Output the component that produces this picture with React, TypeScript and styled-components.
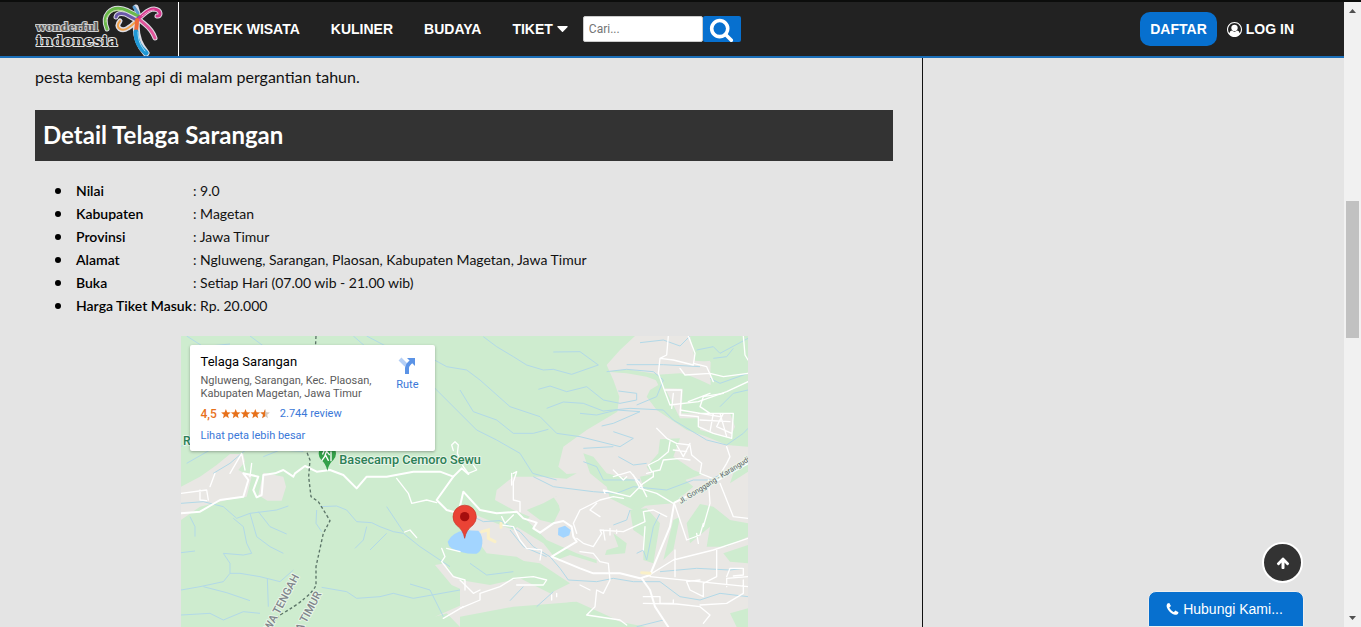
import React from "react";
import styled, { createGlobalStyle } from "styled-components";

const GlobalStyle = createGlobalStyle`
  *, *::before, *::after { box-sizing: border-box; }
  body {
    margin: 0;
    background: #e4e4e4;
    color: #111;
    font-family: Lato, "Open Sans", sans-serif;
  }
  a { color: inherit; text-decoration: none; }
`;

const sans = `"Liberation Sans", Arial, sans-serif`;
const blue = "#0770cf";

const Shell = styled.div`
  display: flex;
  flex-direction: column;
  height: 100vh;
  overflow: hidden;
`;

const TopStrip = styled.div`
  flex: none;
  height: 2px;
  background: #0c0d0c;
`;

const Window = styled.div`
  display: flex;
  flex: 1;
  min-height: 0;
`;

const Page = styled.div`
  flex: 1;
  min-width: 0;
  display: flex;
  flex-direction: column;
`;

const Header = styled.header`
  flex: none;
  display: flex;
  align-items: center;
  height: 56px;
  padding: 0 50px 0 35px;
  background: #222;
  border-bottom: 2px solid #1b6fb9;
  color: #fff;
  font: bold 14px/20px ${sans};
`;

const Brand = styled.a`
  display: flex;
  height: 54px;
  padding-right: 15px;
  border-right: 1px solid #fff;
`;

const Nav = styled.nav`
  display: flex;
  gap: 31px;
  margin-left: 14px;
`;

const NavLink = styled.a`
  display: flex;
  align-items: center;
  gap: 4px;
`;

const Search = styled.form`
  display: flex;
  margin-left: 15px;
`;

const SearchInput = styled.input`
  width: 120px;
  height: 26px;
  padding: 0 5px;
  border: 1px solid #ccc;
  border-radius: 2px;
  background: #fff;
  font: 12px/20px Roboto, sans-serif;
  &::placeholder { color: #757575; }
`;

const SearchButton = styled.button`
  display: flex;
  align-items: center;
  justify-content: center;
  width: 38px;
  height: 26px;
  padding: 0;
  border: 0;
  border-radius: 2px;
  background: ${blue};
  color: #fff;
`;

const Account = styled.div`
  display: flex;
  align-items: center;
  gap: 10px;
  margin-left: auto;
`;

const SignUp = styled.a`
  padding: 7px 10px;
  border-radius: 10px;
  background: ${blue};
`;

const LogIn = styled.a`
  display: flex;
  align-items: center;
  gap: 4px;
`;

const Content = styled.div`
  flex: 1;
  min-height: 0;
  display: flex;
  overflow: hidden;
`;

const Article = styled.main`
  flex: 1;
  min-width: 0;
  padding: 7px 29px 0 35px;
`;

const Aside = styled.aside`
  flex: none;
  width: 422px;
  border-left: 1px solid #111;
`;

const Paragraph = styled.p`
  margin: 0;
  font-size: 16px;
  line-height: 24px;
`;

const SectionTitle = styled.h2`
  margin: 21px 0 0;
  padding: 5px 8px 6px;
  background: #333;
  color: #fff;
  font-size: 24px;
  font-weight: 700;
  line-height: 40px;
`;

const Facts = styled.ul`
  margin: 18px 0 19px;
  padding-left: 20px;
  list-style: none;
  font-size: 14px;
  line-height: 23px;
`;

const Fact = styled.li`
  display: flex;
  align-items: center;
  &::before {
    content: "";
    width: 6px;
    height: 6px;
    margin-right: 15px;
    border-radius: 50%;
    background: #000;
  }
`;

const FactName = styled.strong`
  width: 117px;
  white-space: nowrap;
  font-weight: 600;
  color: #000;
`;

const MapFrame = styled.section`
  position: relative;
  width: 567px;
  max-width: 100%;
  margin: 0 auto;
  font-family: Roboto, sans-serif;
`;

const MapDrawing = styled.svg`
  display: block;
  width: 100%;
  height: auto;
`;

const PlaceCard = styled.div`
  position: absolute;
  top: 9px;
  left: 9px;
  display: flex;
  justify-content: space-between;
  width: 245px;
  height: 106px;
  padding: 9px 16px 0 11px;
  border-radius: 2px;
  background: #fff;
  box-shadow: 0 1px 3px rgba(0, 0, 0, 0.3);
  color: #5b5b5b;
  font-size: 11px;
  line-height: 13px;
`;

const PlaceName = styled.h3`
  margin: 0 0 4px;
  color: #000;
  font-size: 13px;
  font-weight: 400;
  line-height: 16px;
`;

const PlaceAddress = styled.p`
  margin: 0;
`;

const Rating = styled.div`
  display: flex;
  align-items: center;
  margin: 7px 0 8px;
  color: #e7711b;
  line-height: 14px;
`;

const Score = styled.span`
  margin-right: 4px;
  font-size: 12px;
  font-weight: 500;
`;

const MapLink = styled.a`
  color: #3a78d8;
`;

const ReviewLink = styled(MapLink)`
  margin-left: 10px;
`;

const RouteLink = styled(MapLink)`
  display: flex;
  flex-direction: column;
  align-items: center;
  gap: 4px;
  padding-top: 3px;
  height: 50px;
`;

const ToTop = styled.button`
  position: fixed;
  right: 58px;
  bottom: 44px;
  display: flex;
  align-items: center;
  justify-content: center;
  width: 41px;
  height: 41px;
  padding: 0;
  border: 2px solid #fff;
  border-radius: 50%;
  background: #333;
  color: #fff;
`;

const ContactTab = styled.button`
  position: fixed;
  right: 57px;
  bottom: 0;
  display: flex;
  align-items: center;
  justify-content: center;
  gap: 3px;
  width: 156px;
  height: 36px;
  padding: 0 4px 0 0;
  border: 1px solid #eee;
  border-radius: 8px 8px 0 0;
  background: ${blue};
  color: #fff;
  font: 14px/20px ${sans};
`;

const ScrollTrack = styled.div`
  flex: none;
  display: flex;
  flex-direction: column;
  align-items: center;
  width: 17px;
  padding: 7px 0;
  background: #f1f1f1;
`;

const ScrollThumb = styled.div`
  width: 13px;
  height: 137px;
  margin: 188px 2px auto;
  background: #c1c1c1;
`;

const glyphs = {
  search:
    "M1216 832q0-185-131.5-316.5t-316.5-131.5-316.5 131.5-131.5 316.5 131.5 316.5 316.5 131.5 316.5-131.5 131.5-316.5zm512 832q0 52-38 90t-90 38q-54 0-90-38l-343-342q-179 124-399 124-143 0-273.5-55.5t-225-150-150-225-55.5-273.5 55.5-273.5 150-225 225-150 273.5-55.5 273.5 55.5 225 150 150 225 55.5 273.5q0 220-124 399l343 343q37 37 37 90z",
  user:
    "M896 0q182 0 348 71t286 191 191 286 71 348q0 181-70.5 347t-190.5 286-286 191.5-349 71.5-349-71-285.5-191.5-190.5-286-71-347.5 71-348 191-286 286-191 348-71zm619 1351q149-205 149-455 0-156-61-298t-164-245-245-164-298-61-298 61-245 164-164 245-61 298q0 250 149 455 66-327 306-327 131 128 313 128t313-128q240 0 306 327zm-235-647q0-159-112.5-271.5t-271.5-112.5-271.5 112.5-112.5 271.5 112.5 271.5 271.5 112.5 271.5-112.5 112.5-271.5z",
  phone:
    "M1600 1240q0 27-10 70.5t-21 68.5q-21 50-122 106-94 51-186 51-27 0-53-3.5t-57.5-12.5-47-14.5-55.5-20.5-49-18q-98-35-175-83-127-79-264-216t-216-264q-48-77-83-175-3-9-18-49t-20.5-55.5-14.5-47-12.5-57.5-3.5-53q0-92 51-186 56-101 106-122 25-11 68.5-21t70.5-10q14 0 21 3 18 6 53 76 11 19 30 54t35 63.5 31 53.5q3 4 17.5 25t21.5 35.5 7 28.5q0 20-28.5 50t-62 55-62 53-28.5 46q0 9 5 22.5t8.5 20.5 14 24 11.5 19q76 137 174 235t235 174q2 1 19 11.5t24 14 20.5 8.5 22.5 5q18 0 46-28.5t53-62 55-62 50-28.5q14 0 28.5 7t35.5 21.5 25 17.5q25 15 53.5 31t63.5 35 54 30q70 35 76 53 3 7 3 21z",
  up:
    "M1675 971q0 51-37 90l-75 75q-38 38-91 38-54 0-90-38l-294-293v704q0 52-37.5 84.5t-90.5 32.5h-128q-53 0-90.5-32.5t-37.5-84.5v-704l-294 293q-36 38-90 38t-90-38l-75-75q-38-38-38-90 0-53 38-91l651-651q35-37 90-37 54 0 91 37l651 651q37 39 37 91z",
};

function Glyph({ name, size }: { name: keyof typeof glyphs; size: number }) {
  return (
    <svg width={size} height={size} viewBox="0 0 1792 1792" fill="currentColor" aria-hidden="true">
      <path d={glyphs[name]} />
    </svg>
  );
}

function Logo() {
  return (
    <svg width="128" height="54" viewBox="0 0 128 54" role="img" aria-label="Wonderful Indonesia">
      <g fontFamily="'DejaVu Serif', serif" paintOrder="stroke" strokeLinejoin="round">
        <text x="1" y="29" fontSize="11" fill="#555" stroke="#cfcfcf" strokeWidth="2">wonderful</text>
        <text x="1" y="44" fontSize="15" fill="#222" stroke="#e4e4e4" strokeWidth="2">indonesia</text>
      </g>
      <g fill="none" strokeLinecap="round" strokeLinejoin="round">
        <g stroke="#dcdce4" strokeWidth="5">
          <path d="M72 27C66 13 76 4 88 7c7 2 10 5 16 7" />
          <path d="M81 15c1-5 9-4 13-1 5 3 8 5 10 1l-3-10" />
          <path d="M85 19c-6 7 2 11 8 7 5-3 8-7 11-9" />
          <path d="M104 16c5-3 8-9 15-9 8 1 7 8 3 7" />
          <path d="M105 18c5 5 11 7 15 18" />
          <path d="M102 16c-3 17 2 27 9 35" strokeWidth="7" />
        </g>
        <path d="M72 27C66 13 76 4 88 7c7 2 10 5 16 7" stroke="#6ab84a" strokeWidth="3" />
        <path d="M71 20C71 11 79 7 88 9" stroke="#b5dd8c" strokeWidth="1" />
        <path d="M81 15c1-5 9-4 13-1 5 3 8 5 10 1" stroke="#6a58a8" strokeWidth="3" />
        <path d="M85 19c-6 7 2 11 8 7 5-3 8-7 11-9" stroke="#f0a24a" strokeWidth="2" />
        <path d="M104 16c5-3 8-9 15-9 8 1 7 8 3 7" stroke="#d6368c" strokeWidth="3" />
        <path d="M107 14c4-3 7-6 12-6" stroke="#f3a3cd" strokeWidth="1" />
        <path d="M105 18c5 5 11 7 15 18" stroke="#e0559a" strokeWidth="3" />
        <path d="M102 18c0 6-1 9-1 12" stroke="#ef6a3a" strokeWidth="4" />
        <path d="M101 30c0 10 4 16 10 21" stroke="#1f98d6" strokeWidth="5" />
        <path d="M103 30c0 9 3 14 7 19" stroke="#a5dcf4" strokeWidth="1" />
        <path d="M99 5l4 6" stroke="#5a9bd0" strokeWidth="3" />
      </g>
    </svg>
  );
}

const starPath = "M5 0l1.3 3.3 3.6.2L7.1 5.8l.9 3.5L5 7.4 2 9.3l.9-3.5L.1 3.5l3.6-.2z";

function Stars() {
  return (
    <svg width="49" height="10" viewBox="0 0 50 10" role="img" aria-label="4,5 dari 5">
      {[0, 10, 20, 30].map((x) => (
        <path key={x} d={starPath} transform={`translate(${x} 0)`} fill="#e7711b" />
      ))}
      <path d={starPath} transform="translate(40 0)" fill="#d5c8bd" />
      <path d="M45 0v7.4l-3 1.9.9-3.5-2.8-2.3 3.6-.2z" fill="#e7711b" />
    </svg>
  );
}

/* The map is drawn at three units to a pixel. */
function SaranganMap() {
  return (
    <MapDrawing viewBox="3 18 1701 1350" role="img" aria-label="Peta Telaga Sarangan">
      <rect x="3" y="18" width="1701" height="1350" fill="#ceeccf" />

      {/* built-up land */}
      <g fill="#e9e7e4">
        <path d="M3 470L60 440L110 405L150 372L190 372L195 395L175 420L215 440L200 500L140 510L60 530L3 570Z" />
        <path d="M250 428L310 440L318 470L305 512L262 512L235 495Z" />
        <path d="M765 705L795 700L810 730L850 755L900 760L920 790L860 785L815 765Z" />
        <path d="M765 860L900 800V891H840L800 850Z" />
        <path d="M1365 18L1320 60L1280 105L1300 150L1318 200L1312 245L1220 300L1150 350L1135 410L1160 432L1190 430L1160 446L1080 440L1000 440L950 480L945 510L1000 540L1050 560L1000 600L900 560L860 540L830 570L870 600L920 670L1010 680L1060 710L1110 740L1160 755L1090 775L1000 745L960 760L900 730L850 755V800L880 860L1000 850L1180 815L1290 870L1400 891V1368H1704V18Z" />
        <path d="M840 755L960 730L1040 745L1100 770L1160 830L1050 855L900 850L840 855Z" />
      </g>

      {/* forest */}
      <g fill="#ceeccf">
        <path d="M1530 18H1704V128L1640 140L1600 155L1590 135L1592 95L1545 92L1540 65Z" />
        <path d="M1280 125L1340 118L1430 132L1440 155L1400 140L1340 130Z" />
        <path d="M1420 135L1500 130L1590 148L1704 130V350L1640 345L1580 320L1520 300L1430 240L1400 200L1410 180L1435 165Z" />
        <path d="M1440 328L1500 325L1480 380L1540 420L1570 432L1500 455L1420 440L1400 410L1435 370Z" />
        <path d="M1210 370L1240 380L1280 430L1360 450L1390 480L1420 510L1370 545L1290 505L1280 470L1230 430Z" />
        <path d="M1380 440L1480 420L1540 470L1480 520L1360 530L1350 490L1390 470Z" />
        <path d="M1130 498L1140 540L1120 580L1080 570L1040 540L1090 520Z" />
        <path d="M960 540L1040 570L1100 630L1190 670L1250 690L1250 700L1170 675L1130 690L1090 640L1010 590Z" />
        <path d="M1300 610L1340 640L1335 670L1275 675L1280 660L1315 650Z" />
        <path d="M1350 540L1400 535L1440 580L1420 700L1390 690L1390 620L1360 600Z" />
        <path d="M1560 522L1600 530L1650 570L1704 580V620L1640 650L1580 650L1590 590L1530 640L1520 580Z" />
        <path d="M1630 670L1704 645V700L1650 695Z" />
        <path d="M1480 570L1500 560L1480 660L1450 690Z" />
        <path d="M840 665L920 680L1010 690L1080 700L1170 760L1110 790L1020 745L930 765L840 750Z" />
        <path d="M840 860L1000 830L1190 815L1290 860L1350 891H840Z" />
        <path d="M1650 850L1704 835V891H1670Z" />
        <path d="M1660 430L1704 400V425L1650 460Z" />
      </g>
      <g fill="#e9e7e4">
        <path d="M1440 60L1500 70L1510 105L1590 92L1592 165L1560 150L1500 125L1430 130Z" />
        <path d="M1455 175L1508 176L1505 250L1650 250L1665 290L1650 325L1560 300L1555 265L1500 265L1480 225Z" />
        <path d="M1120 500L1180 490L1190 550L1150 545Z" />
      </g>

      {/* rivers */}
      <g fill="none" stroke="#b2d9e8" strokeWidth="3" strokeLinejoin="round">
        <path d="M20 18L70 50L150 42M210 18L280 70L370 110L500 170L560 190L640 260L720 330M520 18L580 70L640 85L750 160L840 250L890 300L950 330L1020 370L1058 430L1130 450" />
        <path d="M560 18L640 60L700 55L800 110L860 120L900 150L990 230L1080 260L1130 310L1200 320L1320 350L1360 325L1300 305M910 20L950 50L1000 80L1040 105L1090 120L1120 118L1175 133L1255 105L1200 65L1120 66" />
        <path d="M1075 178L1110 168L1160 185L1220 170L1270 210L1320 220L1370 210L1370 190L1315 183M1100 235L1150 216L1210 220L1270 243L1350 235L1450 240L1480 270L1580 330L1640 345L1690 310L1704 295" />
        <path d="M1340 104L1450 104L1560 110M1280 125L1340 118L1420 125L1450 150L1430 200L1370 225M1200 250L1250 255L1310 240L1380 245L1300 280L1265 288" />
        <path d="M1380 38L1450 30L1500 48L1530 18M1550 60L1600 50L1620 70L1704 25M1600 85L1640 80L1660 55M1590 145L1620 160L1704 130M1620 230L1660 190L1704 180" />
        <path d="M840 180L880 245L950 270L1000 310L1060 310L1105 298M20 400L90 360L130 340M100 430L150 400L220 340M250 380L300 360L370 364M0 350L60 330M1210 395L1250 410L1270 450L1380 450" />
        <path d="M3 520L70 515L130 530L170 565L210 550L290 540L325 528M160 565L190 590L200 640L215 670L190 675L130 670L150 700L150 730L180 730L240 740L300 755L340 720M210 550L230 620L270 650L310 670M235 545L270 590L320 612M30 560L45 590L45 620M3 668L45 663M3 780L60 770L130 755L150 730M70 770L140 788L210 812M262 745L265 830M3 855L90 850L130 870L190 845L240 850" />
        <path d="M420 530L470 528L500 540L530 575L575 578L600 590L640 605L670 610L720 650L780 690L810 710M560 590L550 630L525 655M620 610L570 660M620 530L670 605M410 540L408 580L425 605M425 772L500 785L530 805L600 800L640 790L700 805L840 780M690 762L750 780L790 860" />
        <path d="M1060 440L1120 470L1240 485L1310 490L1360 470L1460 480L1540 450L1590 450L1704 390M860 550L910 575L960 572L1020 605L1060 650L1110 680L1140 715L1165 750L1250 755L1300 745L1360 755L1440 755L1500 800L1560 810L1620 790L1704 800" />
        <path d="M990 600L1030 650L1100 680M870 700L920 735L1000 725M990 812L1030 770M1070 830L1120 785M1300 585L1340 570L1350 540M1370 670L1390 660L1400 690L1420 590L1440 550M1440 725L1550 715L1650 720L1690 715M1370 890L1450 870M1315 380L1360 405L1400 400M1210 355L1300 350" />
      </g>

      {/* lakes */}
      <g fill="#a3d5ff">
        <path d="M803 635Q815 608 855 601L895 602Q909 618 907 640Q904 667 890 671Q850 674 815 655Q805 648 803 635Z" />
        <path d="M1135 594L1155 587L1172 600L1168 616L1150 623L1134 615Z" />
      </g>

      {/* roads */}
      <g fill="none" stroke="#fff" strokeLinejoin="round" strokeLinecap="round">
        <g strokeWidth="6">
          <path d="M3 550L60 545L120 510L190 500L205 450L190 430L235 440L220 480L230 502L245 495L250 435L285 430L310 420L340 440L345 430L375 408L410 425L450 420L490 435L530 475L560 440L620 440L700 425L780 425L820 440L845 415L865 432" />
          <path d="M820 440L770 510L800 540L835 550L850 485L900 540L950 550L1010 545L1030 565L1070 578L1060 595L1080 608L1120 580L1150 573L1175 590L1180 620L1190 635L1165 650L1115 680L1200 715L1240 730L1320 730L1380 745L1410 735L1470 590L1483 518L1560 480L1704 400" />
          <path d="M1385 745L1410 780L1425 830L1465 891" />
        </g>
        <g strokeWidth="4">
          <path d="M650 445L685 490L695 520L740 510L770 518M785 655L795 680L785 695L820 740L855 750L855 780M800 655L840 665M105 430L90 470M3 490L80 480L85 510M60 480L60 510L80 512M150 430L185 370L195 420M210 440L215 400M790 865L850 830M674 606L690 600L710 623" />
          <path d="M820 362L815 345L825 335L835 345L832 370L850 410L865 430L890 420L880 405" />
          <path d="M1465 18L1460 75L1440 85L1435 130L1455 185L1470 225L1555 215L1640 185L1704 155M1525 18L1545 70L1540 105L1480 90L1440 85M1500 115L1515 135L1590 130L1630 140L1704 130M1600 155L1580 110L1540 100M1690 18L1695 75L1704 90" />
          <path d="M1455 180H1505L1500 255L1555 260L1555 290L1600 310L1655 325L1660 250L1590 250L1560 230L1570 200L1630 190M1480 190L1475 235M1525 215L1590 190M1600 250L1590 305M1620 250L1640 320M1555 250L1655 250M1560 270L1650 275M1630 250L1610 290L1655 310M1500 240L1620 260" />
          <path d="M1430 295L1460 325L1490 340L1530 345L1535 375L1565 400L1560 430L1610 450L1640 400L1650 380L1640 350M1470 335L1465 365L1435 390L1405 405L1415 425L1440 420L1450 390L1500 385L1530 390M1490 345L1510 380L1530 340M1480 360L1520 365" />
          <path d="M1000 430L1010 425L1000 455L1000 510L1020 515L1020 545M995 430L995 465M1300 420L1330 450L1340 440M1275 490L1270 480L1350 500L1390 460L1420 440M1300 440L1350 425L1380 460L1400 500" />
          <path d="M1190 610L1180 580L1200 540L1260 510L1300 500L1330 505M1250 520L1230 540L1260 560M1190 625L1210 640L1240 650L1265 610L1260 600L1330 605L1395 575L1390 545L1420 540L1460 560M1270 600L1275 630M1290 595L1290 615M1310 600L1310 610M1395 590L1390 660M1200 665L1240 670L1260 695L1285 700L1290 750L1270 790L1250 780L1245 830L1220 855M1220 855L1320 870L1340 885" />
          <path d="M1483 520L1510 600L1520 630L1560 615L1570 580M1550 610L1555 640M1485 660L1485 740M1410 740L1704 770M1400 740L1480 690L1600 660L1704 625M1585 450L1590 520L1570 590M1620 460L1660 560L1704 565M1610 660L1610 740L1570 760L1570 800L1530 780L1520 755L1560 750M1640 740L1650 715L1690 715L1690 735L1660 738M1640 770L1640 745L1704 740M1390 800L1440 800L1440 820L1480 820L1480 810M1390 820L1490 822L1560 830L1590 855L1570 880M1560 825L1640 820L1690 790V750" />
          <path d="M965 585L1000 590L1020 630L1040 655L1085 660L1080 690M965 560L975 580L1000 555M840 750L880 790L900 780M840 835L900 810L900 790L960 770L1000 745L1060 740L1100 750L1090 765L1010 765M1200 765L1230 780M1115 810V795M1130 800V790M1420 440V425L1400 430M1360 435L1380 475L1430 490L1480 520" />
        </g>
      </g>
      <g fill="none" stroke="#faf0c8" strokeWidth="9" strokeLinecap="round">
        <path d="M905 605L925 600L925 625L945 635M963 580V592M1385 728L1410 730" />
      </g>

      {/* province border */}
      <path
        d="M408 18L405 80L380 365L390 390L386 440L393 500L415 515L450 572L430 610L408 710L408 765Q395 800 300 855L270 891L240 960"
        fill="none"
        stroke="#5c7568"
        strokeWidth="4"
        strokeDasharray="9 7"
      />

      {/* labels */}
      <g fontFamily="Roboto, sans-serif" stroke="#e9f5e9" strokeWidth="6" paintOrder="stroke" strokeLinejoin="round">
        <text x="478" y="401" fontSize="38" fontWeight="500" fill="#2c8056">Basecamp Cemoro Sewu</text>
        <text x="9" y="345" fontSize="36" fontWeight="500" fill="#2c8056">R</text>
        <text transform="translate(252 940) rotate(-62)" fontSize="33" fontWeight="500" fill="#80868b">JAWA TENGAH</text>
        <text transform="translate(333 966) rotate(-62)" fontSize="33" fontWeight="500" fill="#80868b">JAWA TIMUR</text>
        <text transform="translate(1502 522) rotate(-32)" fontSize="22" fill="#5d6368">Jl. Gonggang - Karangudi</text>
      </g>

      {/* trail marker */}
      <path d="M442 422Q437 400 424 390A26 26 0 1 1 460 390Q447 400 442 422Z" fill="#34a04a" />
      <g fill="none" stroke="#fff" strokeWidth="4" strokeLinecap="round">
        <path d="M440 362L434 380L426 391M437 376L445 391M440 364L448 374M432 363L428 372M453 366V392" />
        <circle cx="441" cy="354" r="2" fill="#fff" />
      </g>

      {/* selected place */}
      <path d="M854 625Q850 600 829 585A35 35 0 1 1 879 585Q858 600 854 625Z" fill="#ea4335" stroke="#c5352b" strokeWidth="2" />
      <circle cx="854" cy="560" r="14" fill="#a50e0e" />
    </MapDrawing>
  );
}

const facts = [
  ["Nilai", "9.0"],
  ["Kabupaten", "Magetan"],
  ["Provinsi", "Jawa Timur"],
  ["Alamat", "Ngluweng, Sarangan, Plaosan, Kabupaten Magetan, Jawa Timur"],
  ["Buka", "Setiap Hari (07.00 wib - 21.00 wib)"],
  ["Harga Tiket Masuk", "Rp. 20.000"],
];

export default function App() {
  return (
    <Shell>
      <GlobalStyle />
      <TopStrip />
      <Window>
        <Page>
          <Header>
            <Brand href="#"><Logo /></Brand>
            <Nav>
              <NavLink href="#">OBYEK WISATA</NavLink>
              <NavLink href="#">KULINER</NavLink>
              <NavLink href="#">BUDAYA</NavLink>
              <NavLink href="#">
                TIKET
                <svg width="11" height="6" viewBox="0 0 11 6" fill="currentColor" aria-hidden="true">
                  <path d="M1 0h9q1 0 .6 1L6 5.7q-.5.5-1 0L.4 1Q0 0 1 0z" />
                </svg>
              </NavLink>
            </Nav>
            <Search onSubmit={(e) => e.preventDefault()}>
              <SearchInput type="text" placeholder="Cari..." aria-label="Cari" />
              <SearchButton type="submit" aria-label="Cari"><Glyph name="search" size={25} /></SearchButton>
            </Search>
            <Account>
              <SignUp href="#">DAFTAR</SignUp>
              <LogIn href="#"><Glyph name="user" size={15} />LOG IN</LogIn>
            </Account>
          </Header>
          <Content>
            <Article>
              <Paragraph>pesta kembang api di malam pergantian tahun.</Paragraph>
              <SectionTitle>Detail Telaga Sarangan</SectionTitle>
              <Facts>
                {facts.map(([name, value]) => (
                  <Fact key={name}><FactName>{name}</FactName><span>: {value}</span></Fact>
                ))}
              </Facts>
              <MapFrame>
                <SaranganMap />
                <PlaceCard>
                  <div>
                    <PlaceName>Telaga Sarangan</PlaceName>
                    <PlaceAddress>
                      Ngluweng, Sarangan, Kec. Plaosan,<br />Kabupaten Magetan, Jawa Timur
                    </PlaceAddress>
                    <Rating>
                      <Score>4,5</Score>
                      <Stars />
                      <ReviewLink href="#">2.744 review</ReviewLink>
                    </Rating>
                    <MapLink href="#">Lihat peta lebih besar</MapLink>
                  </div>
                  <RouteLink href="#">
                    <svg width="18" height="17" viewBox="0 0 18 17" fill="none" aria-hidden="true">
                      <path d="M2 2l6 6" stroke="#b5cff5" strokeWidth="4" />
                      <path d="M9 17v-6q0-3 5-7" stroke="#5b93e6" strokeWidth="4" />
                      <path d="M9 1h8v8z" fill="#5b93e6" />
                    </svg>
                    Rute
                  </RouteLink>
                </PlaceCard>
              </MapFrame>
            </Article>
            <Aside />
          </Content>
        </Page>
        <ScrollTrack aria-hidden="true">
          <svg width="7" height="4" viewBox="0 0 7 4"><path d="M0 4L3.5 0L7 4z" fill="#505050" /></svg>
          <ScrollThumb />
          <svg width="7" height="4" viewBox="0 0 7 4"><path d="M0 0L3.5 4L7 0z" fill="#505050" /></svg>
        </ScrollTrack>
      </Window>
      <ToTop type="button" aria-label="Kembali ke atas"><Glyph name="up" size={14} /></ToTop>
      <ContactTab type="button"><Glyph name="phone" size={15} />Hubungi Kami...</ContactTab>
    </Shell>
  );
}
